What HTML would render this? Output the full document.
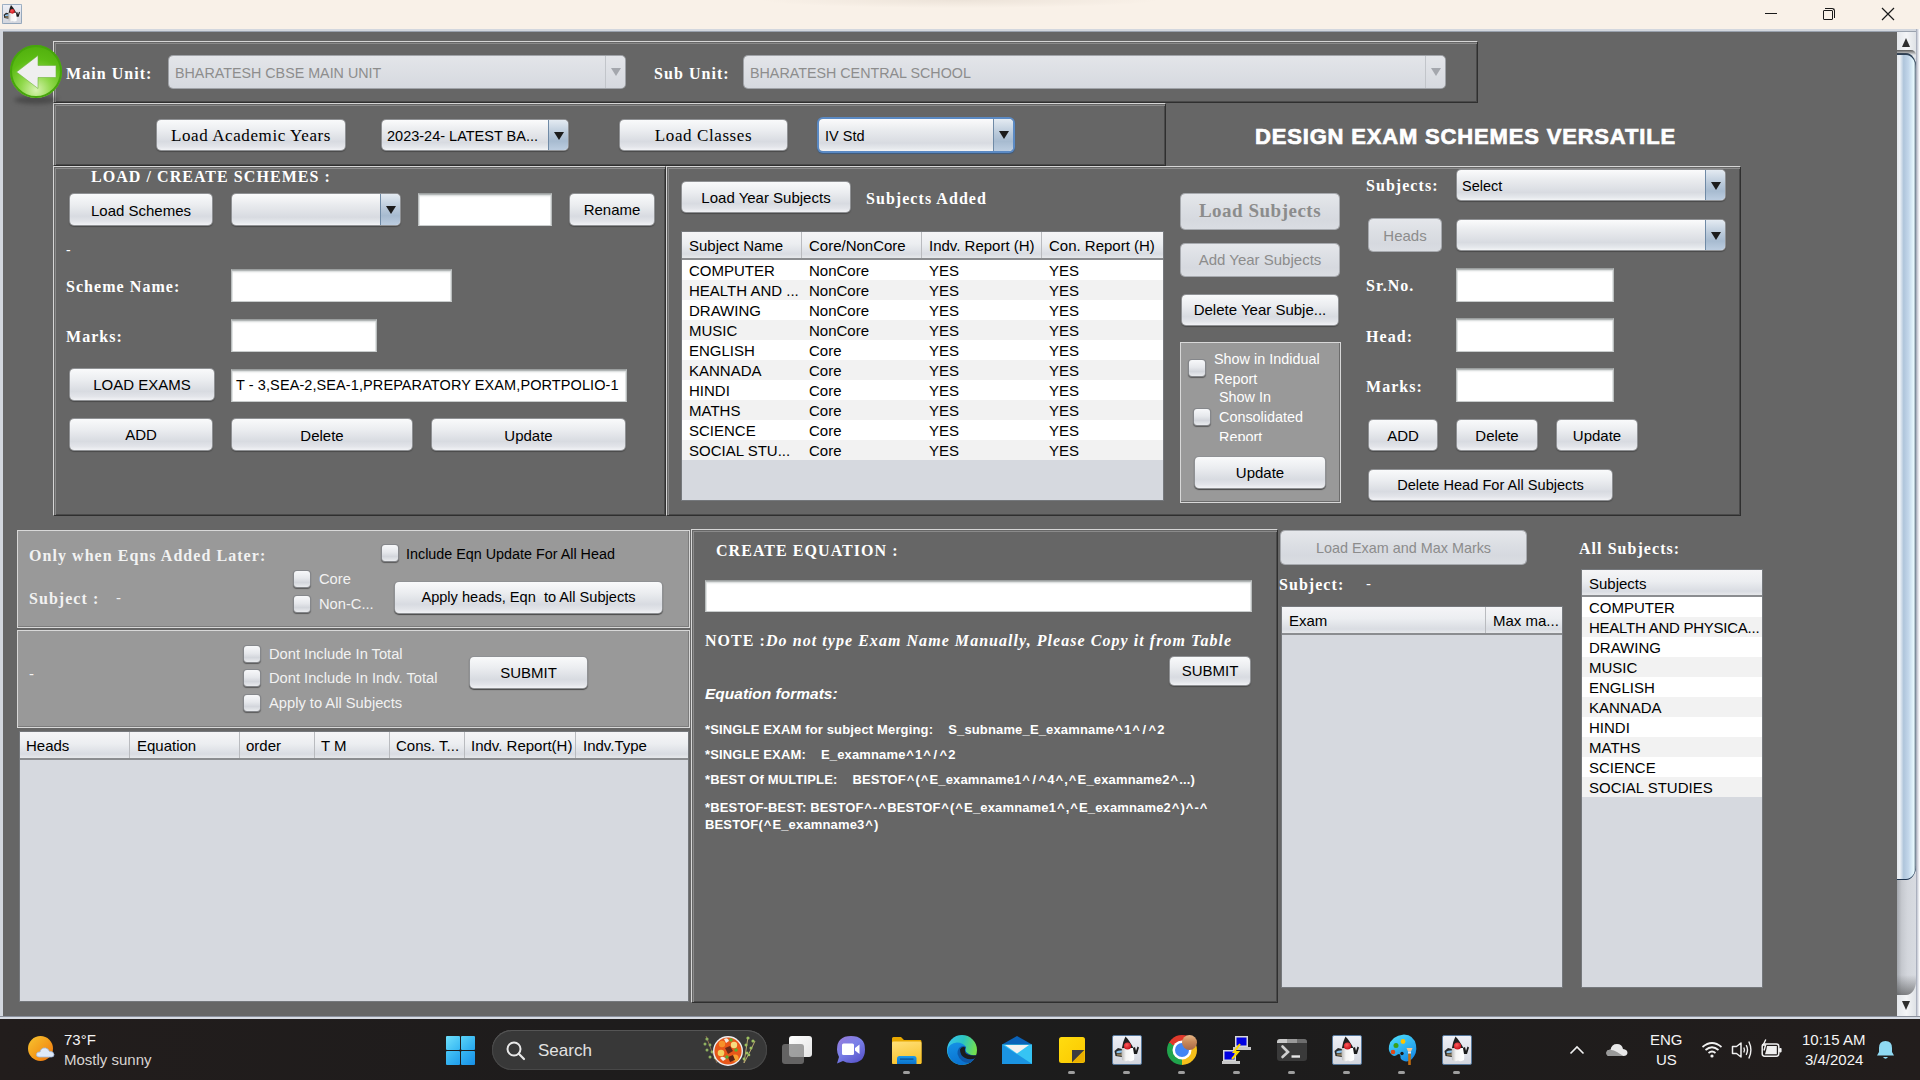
<!DOCTYPE html>
<html><head><meta charset="utf-8">
<style>
*{box-sizing:border-box;margin:0;padding:0}
html,body{width:1920px;height:1080px;overflow:hidden;background:#666666;font-family:"Liberation Sans",sans-serif;}
.a{position:absolute}
#title{left:0;top:0;width:1920px;height:29px;background:#f9f1e8}
#wborder{left:0;top:29px;width:1920px;height:991px;border-left:3px solid #d3d7de;border-top:2px solid #d3d7de;border-bottom:3px solid #d5d9e1;box-shadow:inset 0 1px 0 #9aa2ae}
.etch{border-top:1px solid #d2d2d2;border-left:1px solid #d2d2d2;box-shadow:inset 1px 1px 0 #8c8c8c, 1px 1px 0 #3c3c3c}
.pnl{border-top:1px solid #d6d6d6;border-left:1px solid #d6d6d6;border-right:1px solid #2f2f2f;border-bottom:1px solid #2f2f2f;box-shadow:inset 1px 1px 0 #666666, inset 2px 2px 0 #8a8a8a, inset -1px -1px 0 #4a4a4a}
.lbl{font-family:"Liberation Serif",serif;font-weight:bold;color:#fff;font-size:16px;white-space:nowrap;line-height:20px;letter-spacing:1.05px}
.btn{border-radius:4px;background:linear-gradient(#f9fafb 0%,#ebedf0 35%,#d8dbe1 72%,#e2e4e9 88%,#f1f2f5 100%);box-shadow:0 0 0 1px #8f9194, 0 1px 1px 1px #4a4a4a;color:#000;font-size:15px;text-align:center;white-space:nowrap;overflow:hidden}
.btn.dis{background:linear-gradient(#e5e7eb 0%,#dcdfe4 40%,#d6d9df 75%,#dadde2 100%);box-shadow:0 0 0 1px #a7aaaf, 0 1px 1px 0 #6a6a6a;color:#8c8c8c}
.cb{border-radius:4px;background:linear-gradient(#fbfbfc 0%,#e9ebee 35%,#d8dbe1 75%,#e6e9ed 92%,#f3f4f6 100%);box-shadow:0 0 0 1px #8f9194, 0 1px 1px 1px #4a4a4a;color:#000;font-size:15px;white-space:nowrap;overflow:hidden}
.cb .ar{position:absolute;right:0;top:0;bottom:0;width:20px;background:linear-gradient(#e4ebf2 0%,#b9c9da 45%,#a7bbd0 70%,#bccde0 100%);border-left:1px solid #6f8aa6;border-radius:0 4px 4px 0}
.cb .ar:after{content:"";position:absolute;left:5px;top:12px;border-left:5px solid transparent;border-right:5px solid transparent;border-top:8px solid #1c1c1c}
.cb.dis{background:linear-gradient(#e3e5e9,#d6d9df);box-shadow:0 0 0 1px #a0a3a8;color:#8d8d8d}
.cb.dis .ar{background:linear-gradient(#e3e5e9,#d6d9df);border-left:1px solid #c2c5ca}
.cb.dis .ar:after{border-top-color:#a4a7ad}
.tf{background:#fff;border-top:1px solid #9b9f9f;border-left:1px solid #b9bdbd;border-right:1px solid #b9bdbd;border-bottom:1px solid #c9cdcd;box-shadow:inset 0 1px 0 #b3b7b7, inset 0 3px 2px -1px #d3d7d7, inset 1px 0 0 #e2e5e5, inset -1px 0 0 #e2e5e5;font-size:15px;white-space:nowrap;overflow:hidden;color:#000}
.chk{width:16px;height:16px;border-radius:3px;background:linear-gradient(#f7f8fa 0%,#e6e8ec 45%,#d3d6dc 72%,#e9ebee 100%);box-shadow:0 0 0 1px #85878b,0 1px 1px 1px #5a5a5a}
.wt{color:#fff;font-size:15px;white-space:nowrap}
.th{background:linear-gradient(#f5f5f7 0%,#eceef1 45%,#d9dce2 85%,#e6e8eb 100%);border-bottom:2px solid #8b8d90;height:28px}
.th div{position:absolute;top:0;height:26px;line-height:27px;font-size:15px;white-space:nowrap;overflow:hidden;border-right:1px solid #b9bbbf;padding-left:7px;color:#000}
.tb{background:#d6d9df}
.row{position:absolute;left:0;right:0;height:20px;line-height:20px;font-size:15px;white-space:nowrap;color:#000}
.row:nth-child(odd){background:#fff}
.row:nth-child(even){background:#f2f2f2}
.row span{position:absolute;top:1px}
.eq{color:#fff;font-weight:bold;font-size:13px;white-space:pre;line-height:17px;letter-spacing:0.15px}
.eq i{font-style:normal}
.cr{margin:0 1px 0 0.8px}
.sl{margin:0 1.5px}
.jv{width:30px;height:29px;border-radius:2px;background:linear-gradient(#e8eaf0,#c4c8d0);box-shadow:0 0 0 1px #5d7ea3}
.jv:before{content:"";position:absolute;left:9px;top:3px;border-left:7px solid transparent;border-right:5px solid transparent;border-bottom:14px solid #1a1a1a}
.jv:after{content:"";position:absolute;left:12px;top:8px;width:8px;height:8px;border-radius:50%;background:#e3262c;box-shadow:-3px 9px 0 1px #f4f4f4}
</style></head><body>
<svg width="0" height="0" style="position:absolute"><defs>
<linearGradient id="dkbg" x1="0" y1="0" x2="0" y2="1"><stop offset="0" stop-color="#eef0f7"/><stop offset="1" stop-color="#d2d5dd"/></linearGradient>
<radialGradient id="dknose" cx="0.4" cy="0.35" r="0.6"><stop offset="0" stop-color="#ff5a5a"/><stop offset="1" stop-color="#c8141c"/></radialGradient>
<linearGradient id="dkbody" x1="0" y1="0" x2="1" y2="0"><stop offset="0" stop-color="#b8b8b8"/><stop offset="0.35" stop-color="#f4f4f4"/><stop offset="1" stop-color="#ffffff"/></linearGradient>
</defs></svg>
<div id="title" class="a"></div>
<div class="a" style="left:760px;top:0;width:400px;height:8px;background:radial-gradient(ellipse 50% 100% at 50% 0%,rgba(120,100,80,0.10),rgba(120,100,80,0))"></div>
<div id="wborder" class="a"></div>
<!-- title bar icons -->
<svg class="a" style="left:2px;top:4px" width="20" height="20" viewBox="0 0 30 30">
<rect x="0.5" y="0.5" width="29" height="29" rx="1.5" fill="url(#dkbg)" stroke="#56789c" stroke-width="1"/>
<path d="M6 13 L2.5 16 L3.5 21 L10 22 L10 14 Z" fill="#2a2a2a"/>
<path d="M4.5 16.5 Q7 15 10 15.5 L10 17.5 Q7 18 4.5 18 Z" fill="#8cc4f0"/>
<path d="M4.5 18.5 L10 18.5 L10 21 L5 20.5 Z" fill="#8a7a5a"/>
<path d="M10 12 L20 11 Q23 18 22 25 Q19 27 16 25.5 Q13 27 10 25 Q9 18 10 12 Z" fill="url(#dkbody)"/>
<path d="M13.5 1.5 Q17 5 21.5 13 L10 13 Q11 6 13.5 1.5 Z" fill="#202020"/>
<circle cx="15.5" cy="11" r="3.6" fill="url(#dknose)"/>
<path d="M21 13 L23 12 L24 16 L25.5 11.5 L27 12.5 L25 19 L22 19 Z" fill="#1a1a1a"/>
</svg>
<div class="a" style="left:1765px;top:13px;width:12px;height:1px;background:#1a1a1a"></div>
<div class="a" style="left:1823px;top:10px;width:10px;height:10px;border:1px solid #1a1a1a;border-radius:1px"></div>
<div class="a" style="left:1825px;top:8px;width:10px;height:10px;border-top:1.2px solid #1a1a1a;border-right:1.2px solid #1a1a1a;border-radius:0 3px 0 0"></div>
<svg class="a" style="left:1881px;top:7px" width="14" height="14"><path d="M1 1L13 13M13 1L1 13" stroke="#1a1a1a" stroke-width="1.2"/></svg>

<!-- scrollbar -->
<div class="a" style="left:1916px;top:29px;width:4px;height:990px;background:linear-gradient(90deg,#9aa0b0 0%,#d0d3dc 40%,#f4f5f8 80%,#fff 100%)"></div>
<div class="a" style="left:1897px;top:32px;width:19px;height:984px;background:linear-gradient(90deg,#a4a8ae 0%,#c6c9cf 25%,#d3d6dc 55%,#d8dbe1 100%)"></div>
<div class="a" style="left:1897px;top:32px;width:19px;height:26px;background:linear-gradient(90deg,#e4e7eb,#f4f5f7 50%,#dfe2e6)"></div>
<div class="a" style="left:1902px;top:38px;width:0;height:0;border-left:4.5px solid transparent;border-right:4.5px solid transparent;border-bottom:9px solid #2e2e2e"></div>
<div class="a" style="left:1897px;top:53px;width:19px;height:827px;border-radius:0 10px 10px 0/0 14px 14px 0;background:linear-gradient(90deg,#e4e9ee 0%,#eef2f6 15%,#afc5db 35%,#c2d6ea 60%,#e6f8fd 88%,#5f7080 100%);box-shadow:inset 0 2px 0 #2a3e55, inset 0 -1px 0 #1f3550"></div>
<div class="a" style="left:1897px;top:50px;width:19px;height:5px;border-radius:0 10px 0 0/0 10px 0 0;background:linear-gradient(#5a5a5a,rgba(90,90,90,0))"></div>
<div class="a" style="left:1897px;top:984px;width:19px;height:32px;background:linear-gradient(90deg,#e4e7eb,#f4f5f7 50%,#dfe2e6)"></div>
<div class="a" style="left:1897px;top:950px;width:19px;height:45px;border-radius:0 0 10px 0/0 0 14px 0;background:linear-gradient(90deg,#a4a8ae 0%,#c6c9cf 25%,#d3d6dc 55%,#d8dbe1 100%)"></div>
<div class="a" style="left:1897px;top:975px;width:19px;height:20px;border-radius:0 0 10px 0/0 0 14px 0;background:linear-gradient(rgba(60,60,60,0) 0%,rgba(60,60,60,0.55) 100%)"></div>
<div class="a" style="left:1902px;top:1001px;width:0;height:0;border-left:4.5px solid transparent;border-right:4.5px solid transparent;border-top:9px solid #2e2e2e"></div>

<!-- panels -->
<div class="a pnl" style="left:53px;top:41px;width:1425px;height:62px"></div>
<div class="a pnl" style="left:53px;top:103px;width:1113px;height:63px"></div>
<div class="a pnl" style="left:53px;top:166px;width:613px;height:350px"></div>
<div class="a pnl" style="left:666px;top:166px;width:1075px;height:350px"></div>

<!-- back button -->
<div class="a" style="left:14px;top:96px;width:44px;height:8px;border-radius:50%;background:rgba(40,40,40,0.45);filter:blur(2px)"></div>
<div class="a" style="left:10px;top:45px;width:52px;height:53px;border-radius:50%;background:radial-gradient(circle at 50% 85%,#d8f3b0 0%,#8fd84a 30%,#5cbc14 60%,#4aa80a 100%);box-shadow:inset 0 0 0 2px #46a50c"></div>
<svg class="a" style="left:10px;top:45px" width="52" height="53"><path d="M6.5 27 L28 10.5 L28 20.5 L46 20.5 L46 32.5 L28 32.5 L28 43.5 Z" fill="#efefef" stroke="#6fb43c" stroke-width="0.6"/></svg>

<!-- top panel -->
<div class="a lbl" style="left:66px;top:64px">Main Unit:</div>
<div class="a cb dis" style="left:169px;top:56px;width:456px;height:32px"><span class="a" style="left:6px;top:9px;font-size:14.3px">BHARATESH CBSE MAIN UNIT</span><div class="ar"></div></div>
<div class="a lbl" style="left:654px;top:64px">Sub Unit:</div>
<div class="a cb dis" style="left:744px;top:56px;width:701px;height:32px"><span class="a" style="left:6px;top:9px;font-size:14.3px">BHARATESH CENTRAL SCHOOL</span><div class="ar"></div></div>

<!-- second panel -->
<div class="a btn" style="left:157px;top:120px;width:188px;height:30px;font-family:'Liberation Serif',serif;font-size:17px;letter-spacing:0.6px;line-height:31px">Load Academic Years</div>
<div class="a cb" style="left:382px;top:120px;width:186px;height:30px"><span class="a" style="left:5px;top:8px;font-size:14.5px">2023-24- LATEST BA...</span><div class="ar"></div></div>
<div class="a btn" style="left:620px;top:120px;width:167px;height:30px;font-family:'Liberation Serif',serif;font-size:17px;letter-spacing:0.6px;line-height:31px">Load Classes</div>
<div class="a cb" style="left:819px;top:119px;width:194px;height:32px;box-shadow:0 0 0 2px #5b8ac4,0 1px 1px 2px #3d5a7d"><span class="a" style="left:6px;top:9px;font-size:14.5px">IV Std</span><div class="ar"></div></div>
<div class="a" style="left:1255px;top:123px;font-size:22px;font-weight:bold;color:#fff;letter-spacing:0.83px;white-space:nowrap;line-height:28px;-webkit-text-stroke:0.7px #fff">DESIGN EXAM SCHEMES VERSATILE</div>

<!-- left schemes panel -->
<div class="a lbl" style="left:91px;top:167px">LOAD / CREATE SCHEMES :</div>
<div class="a btn" style="left:70px;top:194px;width:142px;height:31px;line-height:33px">Load Schemes</div>
<div class="a cb" style="left:232px;top:194px;width:168px;height:31px"><div class="ar"></div></div>
<div class="a tf" style="left:418px;top:193px;width:134px;height:33px"></div>
<div class="a btn" style="left:570px;top:194px;width:84px;height:31px;line-height:31px">Rename</div>
<div class="a wt" style="left:66px;top:242px;font-size:14px">-</div>
<div class="a lbl" style="left:66px;top:277px">Scheme Name:</div>
<div class="a tf" style="left:231px;top:269px;width:221px;height:33px"></div>
<div class="a lbl" style="left:66px;top:327px">Marks:</div>
<div class="a tf" style="left:231px;top:319px;width:146px;height:33px"></div>
<div class="a btn" style="left:70px;top:369px;width:144px;height:31px;line-height:31px">LOAD EXAMS</div>
<div class="a tf" style="left:231px;top:369px;width:396px;height:33px"><span class="a" style="left:4px;top:7px;font-size:14.5px;letter-spacing:0.09px">T - 3,SEA-2,SEA-1,PREPARATORY EXAM,PORTPOLIO-1</span></div>
<div class="a btn" style="left:70px;top:419px;width:142px;height:31px;line-height:31px">ADD</div>
<div class="a btn" style="left:232px;top:419px;width:180px;height:31px;line-height:33px">Delete</div>
<div class="a btn" style="left:432px;top:419px;width:193px;height:31px;line-height:33px">Update</div>

<!-- middle panel -->
<div class="a btn" style="left:682px;top:182px;width:168px;height:30px;line-height:32px">Load Year Subjects</div>
<div class="a lbl" style="left:866px;top:189px">Subjects Added</div>
<div class="a" style="left:681px;top:231px;width:483px;height:270px;background:#75787c"></div>
<div class="a tb" style="left:682px;top:232px;width:481px;height:268px;overflow:hidden">
 <div class="a th" style="left:0;top:0;width:481px">
  <div style="left:0;width:120px">Subject Name</div>
  <div style="left:120px;width:120px">Core/NonCore</div>
  <div style="left:240px;width:120px">Indv. Report (H)</div>
  <div style="left:360px;width:121px;border-right:none">Con. Report (H)</div>
 </div>
 <div class="a" style="left:0;top:28px;width:481px;height:200px">
  <div class="row" style="top:0"><span style="left:7px">COMPUTER</span><span style="left:127px">NonCore</span><span style="left:247px">YES</span><span style="left:367px">YES</span></div>
  <div class="row" style="top:20px"><span style="left:7px">HEALTH AND ...</span><span style="left:127px">NonCore</span><span style="left:247px">YES</span><span style="left:367px">YES</span></div>
  <div class="row" style="top:40px"><span style="left:7px">DRAWING</span><span style="left:127px">NonCore</span><span style="left:247px">YES</span><span style="left:367px">YES</span></div>
  <div class="row" style="top:60px"><span style="left:7px">MUSIC</span><span style="left:127px">NonCore</span><span style="left:247px">YES</span><span style="left:367px">YES</span></div>
  <div class="row" style="top:80px"><span style="left:7px">ENGLISH</span><span style="left:127px">Core</span><span style="left:247px">YES</span><span style="left:367px">YES</span></div>
  <div class="row" style="top:100px"><span style="left:7px">KANNADA</span><span style="left:127px">Core</span><span style="left:247px">YES</span><span style="left:367px">YES</span></div>
  <div class="row" style="top:120px"><span style="left:7px">HINDI</span><span style="left:127px">Core</span><span style="left:247px">YES</span><span style="left:367px">YES</span></div>
  <div class="row" style="top:140px"><span style="left:7px">MATHS</span><span style="left:127px">Core</span><span style="left:247px">YES</span><span style="left:367px">YES</span></div>
  <div class="row" style="top:160px"><span style="left:7px">SCIENCE</span><span style="left:127px">Core</span><span style="left:247px">YES</span><span style="left:367px">YES</span></div>
  <div class="row" style="top:180px"><span style="left:7px">SOCIAL STU...</span><span style="left:127px">Core</span><span style="left:247px">YES</span><span style="left:367px">YES</span></div>
 </div>
</div>
<div class="a btn dis" style="left:1181px;top:194px;width:158px;height:35px;line-height:35px;font-family:'Liberation Serif',serif;font-weight:bold;font-size:19px;letter-spacing:0.5px;padding-top:0;line-height:33px">Load Subjects</div>
<div class="a btn dis" style="left:1181px;top:244px;width:158px;height:32px;line-height:32px">Add Year Subjects</div>
<div class="a btn" style="left:1182px;top:295px;width:156px;height:30px;line-height:30px">Delete Year Subje...</div>
<div class="a" style="left:1180px;top:342px;width:161px;height:161px;background:#999999;border:1px solid #d8d8d8;box-shadow:inset -1px -1px 0 #6c6c6c"></div>
<div class="a chk" style="left:1189px;top:360px"></div>
<div class="a wt" style="left:1214px;top:349px;line-height:20px;font-size:14.4px">Show in Indidual<br>Report</div>
<div class="a chk" style="left:1194px;top:409px"></div>
<div class="a" style="left:1219px;top:387px;width:110px;height:54px;overflow:hidden"><div class="wt" style="line-height:20px;font-size:14.4px">Show In<br>Consolidated<br>Report</div></div>
<div class="a btn" style="left:1195px;top:457px;width:130px;height:31px;line-height:31px">Update</div>

<!-- right subjects section -->
<div class="a lbl" style="left:1366px;top:176px">Subjects:</div>
<div class="a cb" style="left:1457px;top:170px;width:268px;height:30px"><span class="a" style="left:5px;top:8px;font-size:14.5px">Select</span><div class="ar"></div></div>
<div class="a btn dis" style="left:1369px;top:219px;width:72px;height:32px;line-height:34px">Heads</div>
<div class="a cb" style="left:1457px;top:220px;width:268px;height:30px"><div class="ar"></div></div>
<div class="a lbl" style="left:1366px;top:276px">Sr.No.</div>
<div class="a tf" style="left:1456px;top:268px;width:158px;height:34px"></div>
<div class="a lbl" style="left:1366px;top:327px">Head:</div>
<div class="a tf" style="left:1456px;top:318px;width:158px;height:34px"></div>
<div class="a lbl" style="left:1366px;top:377px">Marks:</div>
<div class="a tf" style="left:1456px;top:368px;width:158px;height:34px"></div>
<div class="a btn" style="left:1369px;top:420px;width:68px;height:30px;line-height:32px">ADD</div>
<div class="a btn" style="left:1457px;top:420px;width:80px;height:30px;line-height:32px">Delete</div>
<div class="a btn" style="left:1557px;top:420px;width:80px;height:30px;line-height:32px">Update</div>
<div class="a btn" style="left:1369px;top:470px;width:243px;height:30px;line-height:30px;font-size:14.6px">Delete Head For All Subjects</div>

<!-- bottom left panels -->
<div class="a" style="left:17px;top:530px;width:673px;height:98px;background:#999999;border:1px solid #d8d8d8;box-shadow:inset -1px -1px 0 #7c7c7c"></div>
<div class="a" style="left:17px;top:630px;width:673px;height:98px;background:#999999;border:1px solid #d8d8d8;box-shadow:inset -1px -1px 0 #7c7c7c"></div>
<div class="a lbl" style="left:29px;top:546px;color:#f2f2f2">Only when Eqns Added Later:</div>
<div class="a lbl" style="left:29px;top:589px;color:#f2f2f2">Subject :</div>
<div class="a wt" style="left:116px;top:589px;color:#f2f2f2">-</div>
<div class="a chk" style="left:382px;top:545px"></div>
<div class="a" style="left:406px;top:545px;font-size:14.35px;white-space:nowrap;color:#000;line-height:18px">Include Eqn Update For All Head</div>
<div class="a chk" style="left:294px;top:571px"></div>
<div class="a wt" style="left:319px;top:570px;color:#f2f2f2;line-height:18px;font-size:14.7px">Core</div>
<div class="a chk" style="left:294px;top:596px"></div>
<div class="a wt" style="left:319px;top:595px;color:#f2f2f2;line-height:18px;font-size:14.7px">Non-C...</div>
<div class="a btn" style="left:395px;top:582px;width:267px;height:31px;line-height:31px;font-size:14.6px">Apply heads, Eqn&nbsp; to All Subjects</div>
<div class="a wt" style="left:29px;top:665px;color:#f2f2f2">-</div>
<div class="a chk" style="left:244px;top:646px"></div>
<div class="a wt" style="left:269px;top:645px;color:#f2f2f2;line-height:18px;font-size:14.7px">Dont Include In Total</div>
<div class="a chk" style="left:244px;top:670px"></div>
<div class="a wt" style="left:269px;top:669px;color:#f2f2f2;line-height:18px;font-size:14.7px">Dont Include In Indv. Total</div>
<div class="a chk" style="left:244px;top:695px"></div>
<div class="a wt" style="left:269px;top:694px;color:#f2f2f2;line-height:18px;font-size:14.7px">Apply to All Subjects</div>
<div class="a btn" style="left:470px;top:657px;width:117px;height:31px;line-height:31px">SUBMIT</div>

<!-- heads table -->
<div class="a" style="left:19px;top:731px;width:670px;height:271px;background:#75787c"></div>
<div class="a tb" style="left:20px;top:732px;width:668px;height:269px;overflow:hidden">
 <div class="a th" style="left:0;top:0;width:668px">
  <div style="left:0;width:110px;padding-left:6px">Heads</div>
  <div style="left:110px;width:110px">Equation</div>
  <div style="left:220px;width:75px;padding-left:6px">order</div>
  <div style="left:295px;width:75px;padding-left:6px">T M</div>
  <div style="left:370px;width:75px;padding-left:6px">Cons. T...</div>
  <div style="left:445px;width:111px;padding-left:6px">Indv. Report(H)</div>
  <div style="left:556px;width:112px;padding-left:7px;border-right:none">Indv.Type</div>
 </div>
</div>

<!-- create equation panel -->
<div class="a pnl" style="left:691px;top:529px;width:587px;height:474px"></div>
<div class="a lbl" style="left:716px;top:541px">CREATE EQUATION :</div>
<div class="a tf" style="left:705px;top:580px;width:547px;height:32px"></div>
<div class="a lbl" style="left:705px;top:631px;white-space:pre">NOTE :<i style="letter-spacing:1.05px">Do not type Exam Name Manually, Please Copy it from Table</i></div>
<div class="a btn" style="left:1170px;top:657px;width:80px;height:28px;line-height:28px">SUBMIT</div>
<div class="a" style="left:705px;top:684px;color:#fff;font-weight:bold;font-style:italic;font-size:15.5px;white-space:nowrap;line-height:20px">Equation formats:</div>
<div class="a eq" style="left:705px;top:721px">*SINGLE EXAM for subject Merging:    S_subname_E_examname<i class="cr">^</i>1<i class="cr">^</i><i class="sl">/</i><i class="cr">^</i>2</div>
<div class="a eq" style="left:705px;top:746px">*SINGLE EXAM:    E_examname<i class="cr">^</i>1<i class="cr">^</i><i class="sl">/</i><i class="cr">^</i>2</div>
<div class="a eq" style="left:705px;top:771px">*BEST Of MULTIPLE:    BESTOF<i class="cr">^</i>(<i class="cr">^</i>E_examname1<i class="cr">^</i><i class="sl">/</i><i class="cr">^</i>4<i class="cr">^</i>,<i class="cr">^</i>E_examname2<i class="cr">^</i>...)</div>
<div class="a eq" style="left:705px;top:799px">*BESTOF-BEST: BESTOF<i class="cr">^</i>-<i class="cr">^</i>BESTOF<i class="cr">^</i>(<i class="cr">^</i>E_examname1<i class="cr">^</i>,<i class="cr">^</i>E_examname2<i class="cr">^</i>)<i class="cr">^</i>-<i class="cr">^</i><br>BESTOF(<i class="cr">^</i>E_examname3<i class="cr">^</i>)</div>

<!-- right bottom area -->
<div class="a btn dis" style="left:1281px;top:531px;width:245px;height:33px;line-height:35px;font-size:14.4px">Load Exam and Max Marks</div>
<div class="a lbl" style="left:1279px;top:575px">Subject:</div>
<div class="a wt" style="left:1366px;top:575px">-</div>
<div class="a" style="left:1281px;top:606px;width:282px;height:382px;background:#75787c"></div>
<div class="a tb" style="left:1282px;top:607px;width:280px;height:380px;overflow:hidden">
 <div class="a th" style="left:0;top:0;width:280px">
  <div style="left:0;width:204px">Exam</div>
  <div style="left:204px;width:76px;padding-left:7px;border-right:none">Max ma...</div>
 </div>
</div>
<div class="a lbl" style="left:1579px;top:539px">All Subjects:</div>
<div class="a" style="left:1581px;top:569px;width:182px;height:419px;background:#75787c"></div>
<div class="a tb" style="left:1582px;top:570px;width:180px;height:417px;overflow:hidden">
 <div class="a th" style="left:0;top:0;width:180px;height:27px">
  <div style="left:0;width:180px;border-right:none">Subjects</div>
 </div>
 <div class="a" style="left:0;top:27px;width:180px;height:200px">
  <div class="row" style="top:0"><span style="left:7px">COMPUTER</span></div>
  <div class="row" style="top:20px"><span style="left:7px;letter-spacing:-0.25px">HEALTH AND PHYSICA...</span></div>
  <div class="row" style="top:40px"><span style="left:7px">DRAWING</span></div>
  <div class="row" style="top:60px"><span style="left:7px">MUSIC</span></div>
  <div class="row" style="top:80px"><span style="left:7px">ENGLISH</span></div>
  <div class="row" style="top:100px"><span style="left:7px">KANNADA</span></div>
  <div class="row" style="top:120px"><span style="left:7px">HINDI</span></div>
  <div class="row" style="top:140px"><span style="left:7px">MATHS</span></div>
  <div class="row" style="top:160px"><span style="left:7px">SCIENCE</span></div>
  <div class="row" style="top:180px"><span style="left:7px">SOCIAL STUDIES</span></div>
 </div>
</div>

<!-- taskbar -->
<div class="a" style="left:0;top:1016px;width:1920px;height:1px;background:#8a909c"></div>
<div class="a" style="left:0;top:1017px;width:1920px;height:2px;background:#d8dce4"></div>
<div class="a" style="left:0;top:1019px;width:1920px;height:61px;background:linear-gradient(90deg,#221d1c 0%,#1e1c1c 30%,#1c1c1c 60%,#221d1c 100%)"></div>
<!-- weather -->
<div class="a" style="left:28px;top:1036px;width:25px;height:25px;border-radius:50%;background:linear-gradient(135deg,#f7c531 0%,#f39a1a 55%,#f0700e 100%)"></div>
<svg class="a" style="left:36px;top:1044px" width="20" height="14"><path d="M3 13 Q0 13 0.5 10 Q1 7.5 4 8 Q5 3.5 9.5 4 Q12.5 4.5 13.5 7.5 Q17.5 7 18 10.5 Q18 13 15.5 13 Z" fill="#dfe9f8" stroke="#9fb9de" stroke-width="0.8"/></svg>
<div class="a" style="left:64px;top:1031px;color:#f4f4f4;font-size:15px;line-height:18px;white-space:nowrap">73°F</div>
<div class="a" style="left:64px;top:1051px;color:#d8d4d2;font-size:15px;line-height:18px;white-space:nowrap">Mostly sunny</div>
<!-- start -->
<div class="a" style="left:446px;top:1036px;width:14px;height:14px;background:linear-gradient(135deg,#6fe0fb,#34b6f3);border-radius:1px"></div>
<div class="a" style="left:461px;top:1036px;width:14px;height:14px;background:linear-gradient(135deg,#5ad3f8,#25a6ee);border-radius:1px"></div>
<div class="a" style="left:446px;top:1051px;width:14px;height:14px;background:linear-gradient(135deg,#48c6f6,#1f9ceb);border-radius:1px"></div>
<div class="a" style="left:461px;top:1051px;width:14px;height:14px;background:linear-gradient(135deg,#38b8f3,#178fe6);border-radius:1px"></div>
<!-- search -->
<div class="a" style="left:492px;top:1030px;width:275px;height:40px;border-radius:20px;background:#383838;box-shadow:inset 0 1px 0 #555, inset 0 0 0 1px #484848"></div>
<svg class="a" style="left:505px;top:1040px" width="22" height="22"><circle cx="9" cy="9" r="6.5" fill="none" stroke="#e8e8e8" stroke-width="2"/><path d="M13.8 13.8 L19 19" stroke="#e8e8e8" stroke-width="2.2" stroke-linecap="round"/></svg>
<div class="a" style="left:538px;top:1040px;color:#e2e2e2;font-size:17px;line-height:22px;white-space:nowrap">Search</div>
<svg class="a" style="left:702px;top:1034px" width="70" height="34">
<path d="M4 2 Q9 16 15 29" stroke="#8a6a50" stroke-width="1" fill="none"/>
<g fill="#8fb060"><circle cx="5" cy="5" r="1.6"/><circle cx="3" cy="10" r="1.5"/><circle cx="8" cy="11" r="1.4"/><circle cx="5" cy="16" r="1.5"/><circle cx="10" cy="18" r="1.4"/><circle cx="8" cy="23" r="1.5"/><circle cx="13" cy="24" r="1.3"/></g>
<path d="M46 3 Q44 16 42 29 M53 7 Q48 18 42 29" stroke="#b8a870" stroke-width="1" fill="none"/>
<g fill="#9cc060"><circle cx="46" cy="4" r="1.6"/><circle cx="51" cy="7" r="1.6"/><circle cx="44" cy="11" r="1.5"/><circle cx="49" cy="14" r="1.5"/><circle cx="45" cy="19" r="1.5"/><circle cx="42" cy="25" r="1.4"/><circle cx="47" cy="21" r="1.3"/></g>
<circle cx="26" cy="17" r="15" fill="#eef0f4"/>
<circle cx="26" cy="17" r="13.6" fill="#e8571a"/>
<circle cx="20" cy="10" r="3.2" fill="#f6922a"/><circle cx="33" cy="24" r="3.6" fill="#f8a030"/>
<circle cx="19" cy="19" r="3.3" fill="#f4d060"/><circle cx="32" cy="11" r="3.2" fill="#f6dc80"/>
<path d="M23 14 L28 12 L31 17 L26 20 Z" fill="#6a2a18"/><path d="M26 23 L31 21 L33 26 L28 28 Z" fill="#5c2414"/>
<circle cx="29" cy="6" r="1.7" fill="#5ab030"/><circle cx="34" cy="16" r="1.8" fill="#5ab030"/><circle cx="25" cy="23" r="1.7" fill="#5ab030"/>
<path d="M22 5 Q26 3 27 7 L24 9 Z" fill="#f0ece4"/><path d="M18 24 Q21 21 24 25 L21 27 Z" fill="#f0ece4"/>
</svg>
<!-- task view -->
<div class="a" style="left:789px;top:1036px;width:23px;height:21px;border-radius:3px;background:linear-gradient(135deg,#ffffff,#e4e4e4)"></div>
<div class="a" style="left:782px;top:1044px;width:22px;height:20px;border-radius:3px;background:rgba(128,128,128,0.72)"></div>
<!-- meet -->
<svg class="a" style="left:836px;top:1035px" width="31" height="30"><defs><linearGradient id="mt" x1="0" y1="0" x2="0.7" y2="1"><stop offset="0" stop-color="#9a7ad8"/><stop offset="0.5" stop-color="#7a80e8"/><stop offset="1" stop-color="#5a56cc"/></linearGradient></defs>
<path d="M15 1 Q29 1 29 14.5 Q29 28 15 28 Q10 28 7 26 L1 28.5 L3 22 Q1 18.5 1 14.5 Q1 1 15 1 Z" fill="url(#mt)"/>
<rect x="6" y="8.5" width="12" height="11.5" rx="1.5" fill="#fff"/><path d="M19 13 L23.5 9.5 L23.5 19 L19 15.5 Z" fill="#fff"/>
</svg>
<!-- explorer -->
<svg class="a" style="left:891px;top:1036px" width="32" height="29"><defs><linearGradient id="fd" x1="0" y1="0" x2="0.3" y2="1"><stop offset="0" stop-color="#ffe07a"/><stop offset="1" stop-color="#f8c430"/></linearGradient><linearGradient id="fdb" x1="0" y1="0" x2="0" y2="1"><stop offset="0" stop-color="#1e9ae8"/><stop offset="1" stop-color="#0a72cc"/></linearGradient></defs>
<path d="M1 2.5 Q1 1 2.5 1 L10 1 L13 4 L29.5 4 Q30.5 4 30.5 5.5 L30.5 26.5 Q30.5 28 29 28 L2.5 28 Q1 28 1 26.5 Z" fill="#e8a800"/>
<path d="M1 6.5 Q1 5.5 2.5 5.5 L29 5.5 Q30.5 5.5 30.5 7 L30.5 26.5 Q30.5 28 29 28 L2.5 28 Q1 28 1 26.5 Z" fill="url(#fd)"/>
<path d="M6 28 L6 22.5 Q6 20 8.5 20 L23 20 Q25.5 20 25.5 22.5 L25.5 28 Z" fill="url(#fdb)"/>
<rect x="9" y="22.5" width="13.5" height="1.2" fill="#0a4a8a"/>
</svg>
<div class="a" style="left:903px;top:1071px;width:7px;height:3px;border-radius:2px;background:#9e9e9e"></div>
<!-- edge -->
<svg class="a" style="left:947px;top:1035px" width="30" height="30"><defs><linearGradient id="edg1" x1="0" y1="0" x2="1" y2="0.3"><stop offset="0" stop-color="#38c4f4"/><stop offset="0.55" stop-color="#2cc4c0"/><stop offset="1" stop-color="#72e050"/></linearGradient><linearGradient id="edg2" x1="0" y1="0" x2="0.3" y2="1"><stop offset="0" stop-color="#1592e6"/><stop offset="1" stop-color="#0a72d0"/></linearGradient></defs>
<circle cx="15" cy="15" r="15" fill="url(#edg1)"/>
<path d="M0.5 15 Q2 8 10 7.5 Q16 7.5 19 12 L19 17 Q22 21 29.2 20.5 A15 15 0 0 1 15 30 A15 15 0 0 1 0.5 15 Z" fill="url(#edg2)"/>
<path d="M12 13 Q16 9.5 19 12 Q17 14 19 17 Q23 20.5 29.2 20.5 A15 15 0 0 1 23 28 Q13 28 10.5 19 Q10.5 15 12 13 Z" fill="#0e58a8"/>
<path d="M13 14.5 Q15 11 18.5 12.5 Q17 15 18.5 18 Q21 21 29.4 20.3 L28.6 23.2 Q23 25.5 18 23 Q13 20.5 13 14.5 Z" fill="#1c1c1c"/>
</svg>
<!-- mail -->
<svg class="a" style="left:1002px;top:1035px" width="30" height="30"><path d="M0 9.5 L15 1 L30 9.5 Z" fill="#0a62b8"/><path d="M0 9.5 L30 9.5 L30 29 L0 29 Z" fill="#1d9ce6"/><path d="M30 9.5 L30 29 L0 9.5 Z" fill="#36c4f4"/><path d="M0 9.5 L0 29 L30 29 Z" fill="#1a8fe0" opacity="0.6"/><path d="M3 10 L27 10 L15 18.5 Z" fill="#f4f2f0"/></svg>
<!-- sticky -->
<div class="a" style="left:1059px;top:1037px;width:26px;height:26px;border-radius:2.5px;background:linear-gradient(135deg,#ffdc10,#fbc800)"></div>
<svg class="a" style="left:1072px;top:1050px" width="13" height="13"><path d="M0 0 L12.5 0 L0 12.5 Z" fill="#3c3c40"/><path d="M12.5 0 L12.5 10.5 Q12.5 12.5 10.5 12.5 L0 12.5 Z" fill="#eab000"/></svg>
<div class="a" style="left:1068px;top:1071px;width:7px;height:3px;border-radius:2px;background:#9e9e9e"></div>
<!-- java 1 -->
<svg class="a" style="left:1112px;top:1035px" width="30" height="30" viewBox="0 0 30 30">
<rect x="0.5" y="0.5" width="29" height="29" rx="1.5" fill="url(#dkbg)" stroke="#56789c" stroke-width="1"/>
<path d="M6 13 L2.5 16 L3.5 21 L10 22 L10 14 Z" fill="#2a2a2a"/>
<path d="M4.5 16.5 Q7 15 10 15.5 L10 17.5 Q7 18 4.5 18 Z" fill="#8cc4f0"/>
<path d="M4.5 18.5 L10 18.5 L10 21 L5 20.5 Z" fill="#8a7a5a"/>
<path d="M10 12 L20 11 Q23 18 22 25 Q19 27 16 25.5 Q13 27 10 25 Q9 18 10 12 Z" fill="url(#dkbody)"/>
<path d="M13.5 1.5 Q17 5 21.5 13 L10 13 Q11 6 13.5 1.5 Z" fill="#202020"/>
<circle cx="15.5" cy="11" r="3.6" fill="url(#dknose)"/>
<path d="M21 13 L23 12 L24 16 L25.5 11.5 L27 12.5 L25 19 L22 19 Z" fill="#1a1a1a"/>
</svg>
<div class="a" style="left:1123px;top:1071px;width:7px;height:3px;border-radius:2px;background:#9e9e9e"></div>
<!-- chrome -->
<div class="a" style="left:1167px;top:1035px;width:30px;height:30px;border-radius:50%;background:conic-gradient(from -60deg,#e0392b 0deg 120deg,#f5bf1a 120deg 240deg,#20a44c 240deg 360deg)"></div>
<div class="a" style="left:1175px;top:1043px;width:14px;height:14px;border-radius:50%;background:#4285f4;box-shadow:0 0 0 2.5px #fff"></div>
<div class="a" style="left:1182px;top:1035px;width:15px;height:15px;border-radius:50%;background:linear-gradient(#e8b888 0%,#c98a5a 45%,#a8684a 100%)"></div>
<div class="a" style="left:1178px;top:1071px;width:7px;height:3px;border-radius:2px;background:#9e9e9e"></div>
<!-- network -->
<svg class="a" style="left:1222px;top:1035px" width="30" height="30"><rect x="13" y="1" width="13" height="11" fill="#d8d8d8"/><rect x="14.5" y="2.5" width="10" height="8" fill="#0000e0"/><rect x="11" y="12" width="18" height="3" fill="#c8c8c8"/><rect x="1" y="15" width="13" height="11" fill="#d8d8d8"/><rect x="2.5" y="16.5" width="10" height="8" fill="#0000e0"/><rect x="0" y="26" width="18" height="3" fill="#c8c8c8"/><path d="M18 9 L12 17 L16 17 L10 24" stroke="#ffd800" stroke-width="2" fill="none"/></svg>
<div class="a" style="left:1233px;top:1071px;width:7px;height:3px;border-radius:2px;background:#9e9e9e"></div>
<!-- terminal -->
<div class="a" style="left:1277px;top:1039px;width:30px;height:22px;border-radius:3px;background:#3a3a3a"></div><div class="a" style="left:1277px;top:1039px;width:30px;height:4px;border-radius:3px 3px 0 0;background:linear-gradient(90deg,#c8c8c8 0 33%,#9a9a9a 33% 66%,#6e6e6e 66%)"></div>
<svg class="a" style="left:1280px;top:1044px" width="24" height="16"><path d="M2.5 2.5 L8 8 L2.5 13" stroke="#d0d0d0" stroke-width="2.6" fill="none" stroke-linecap="round"/><path d="M11.5 12.5 L20 12.5" stroke="#e8e8e8" stroke-width="2.4"/></svg>
<div class="a" style="left:1288px;top:1071px;width:7px;height:3px;border-radius:2px;background:#9e9e9e"></div>
<!-- java 2 -->
<svg class="a" style="left:1332px;top:1035px" width="30" height="30" viewBox="0 0 30 30">
<rect x="0.5" y="0.5" width="29" height="29" rx="1.5" fill="url(#dkbg)" stroke="#56789c" stroke-width="1"/>
<path d="M6 13 L2.5 16 L3.5 21 L10 22 L10 14 Z" fill="#2a2a2a"/>
<path d="M4.5 16.5 Q7 15 10 15.5 L10 17.5 Q7 18 4.5 18 Z" fill="#8cc4f0"/>
<path d="M4.5 18.5 L10 18.5 L10 21 L5 20.5 Z" fill="#8a7a5a"/>
<path d="M10 12 L20 11 Q23 18 22 25 Q19 27 16 25.5 Q13 27 10 25 Q9 18 10 12 Z" fill="url(#dkbody)"/>
<path d="M13.5 1.5 Q17 5 21.5 13 L10 13 Q11 6 13.5 1.5 Z" fill="#202020"/>
<circle cx="15.5" cy="11" r="3.6" fill="url(#dknose)"/>
<path d="M21 13 L23 12 L24 16 L25.5 11.5 L27 12.5 L25 19 L22 19 Z" fill="#1a1a1a"/>
</svg>
<div class="a" style="left:1343px;top:1071px;width:7px;height:3px;border-radius:2px;background:#9e9e9e"></div>
<!-- paint -->
<svg class="a" style="left:1388px;top:1033px" width="30" height="32"><defs><linearGradient id="pnt" x1="0.2" y1="0" x2="0.8" y2="1"><stop offset="0" stop-color="#4cdcfb"/><stop offset="1" stop-color="#1488e6"/></linearGradient></defs>
<path d="M16 1.5 Q26 2 28 12 Q29.5 20 24 26 Q20 30 15 27.5 Q12 26 12.5 23 Q12 20 9.5 21.5 Q7 24 4 22 Q0 19 1 13 Q3 3 16 1.5 Z" fill="url(#pnt)"/>
<circle cx="15" cy="8.5" r="2.4" fill="#ffc400"/><circle cx="8" cy="12.5" r="2.5" fill="#3aa018"/><circle cx="5" cy="19" r="2.3" fill="#e04818"/><circle cx="14" cy="20.5" r="1.7" fill="#1c1c1c"/>
<path d="M18.5 15 L24.5 15 L23 18.5 L20 18.5 Z" fill="#f4c890"/><rect x="20" y="18.5" width="3" height="2.2" fill="#e8e8f0"/><rect x="20.2" y="20.7" width="2.6" height="14" fill="#c06c10"/>
</svg>
<div class="a" style="left:1398px;top:1071px;width:7px;height:3px;border-radius:2px;background:#9e9e9e"></div>
<!-- java 3 -->
<svg class="a" style="left:1442px;top:1035px" width="30" height="30" viewBox="0 0 30 30">
<rect x="0.5" y="0.5" width="29" height="29" rx="1.5" fill="url(#dkbg)" stroke="#56789c" stroke-width="1"/>
<path d="M6 13 L2.5 16 L3.5 21 L10 22 L10 14 Z" fill="#2a2a2a"/>
<path d="M4.5 16.5 Q7 15 10 15.5 L10 17.5 Q7 18 4.5 18 Z" fill="#8cc4f0"/>
<path d="M4.5 18.5 L10 18.5 L10 21 L5 20.5 Z" fill="#8a7a5a"/>
<path d="M10 12 L20 11 Q23 18 22 25 Q19 27 16 25.5 Q13 27 10 25 Q9 18 10 12 Z" fill="url(#dkbody)"/>
<path d="M13.5 1.5 Q17 5 21.5 13 L10 13 Q11 6 13.5 1.5 Z" fill="#202020"/>
<circle cx="15.5" cy="11" r="3.6" fill="url(#dknose)"/>
<path d="M21 13 L23 12 L24 16 L25.5 11.5 L27 12.5 L25 19 L22 19 Z" fill="#1a1a1a"/>
</svg>
<div class="a" style="left:1453px;top:1071px;width:7px;height:3px;border-radius:2px;background:#9e9e9e"></div>
<!-- tray -->
<svg class="a" style="left:1569px;top:1044px" width="16" height="11"><path d="M1.5 9.5 L8 3 L14.5 9.5" stroke="#f0f0f0" stroke-width="1.6" fill="none"/></svg>
<svg class="a" style="left:1606px;top:1042px" width="22" height="15"><path d="M4 14 Q0 14 0.5 10.5 Q1 7.5 4.5 7.8 Q5.5 2 11 2 Q16 2 17 7 Q21.5 7.5 21.5 11 Q21 14 17.5 14 Z" fill="#e8e8e8"/><path d="M4 14 Q0 14 0.5 10.5 Q1 7.5 4.5 7.8 Q8 8 11 10 Q14 12 17.5 14 Z" fill="#999999"/></svg>
<div class="a" style="left:1650px;top:1031px;color:#f4f4f4;font-size:15px;line-height:18px;white-space:nowrap">ENG</div>
<div class="a" style="left:1656px;top:1051px;color:#f4f4f4;font-size:15px;line-height:18px;white-space:nowrap">US</div>
<svg class="a" style="left:1701px;top:1041px" width="22" height="17"><path d="M1.5 6 Q11 -2 20.5 6" stroke="#f0f0f0" stroke-width="1.7" fill="none"/><path d="M4.5 9 Q11 3.5 17.5 9" stroke="#f0f0f0" stroke-width="1.7" fill="none"/><path d="M7.5 12 Q11 9 14.5 12" stroke="#f0f0f0" stroke-width="1.7" fill="none"/><circle cx="11" cy="15" r="1.6" fill="#f0f0f0"/></svg>
<svg class="a" style="left:1731px;top:1040px" width="24" height="20"><path d="M1.5 6.5 L5.5 6.5 L10 3 L10 17 L5.5 13.5 L1.5 13.5 Z" stroke="#f0f0f0" stroke-width="1.5" fill="none" stroke-linejoin="round"/><path d="M12.8 7.5 Q14.2 10 12.8 12.5" stroke="#f0f0f0" stroke-width="1.4" fill="none"/><path d="M15.2 5.2 Q17.8 10 15.2 14.8" stroke="#f0f0f0" stroke-width="1.4" fill="none"/><path d="M17.8 1.5 Q22 10 17.8 18.5" stroke="#f0f0f0" stroke-width="1.4" fill="none"/></svg>
<svg class="a" style="left:1761px;top:1039px" width="23" height="19"><rect x="1.2" y="5" width="16.6" height="12.2" rx="2.4" stroke="#f0f0f0" stroke-width="1.5" fill="none"/><path d="M6 7 L15.8 7 L15.8 15.2 L4 15.2 Q5.5 11 6 7 Z" fill="#f0f0f0"/><rect x="18" y="9" width="2.6" height="4.4" rx="0.8" fill="#f0f0f0"/><path d="M4.8 0.5 L2.2 6 L4.6 6 L3 11.5" stroke="#f0f0f0" stroke-width="1.4" fill="none"/></svg>
<div class="a" style="left:1802px;top:1031px;color:#f4f4f4;font-size:15px;line-height:18px;white-space:nowrap">10:15 AM</div>
<div class="a" style="left:1805px;top:1051px;color:#f4f4f4;font-size:15px;line-height:18px;white-space:nowrap">3/4/2024</div>
<svg class="a" style="left:1876px;top:1040px" width="19" height="21"><path d="M9.5 1 Q3 1 3 8 L3 12 L1 15.5 L18 15.5 L16 12 L16 8 Q16 1 9.5 1 Z" fill="#8fd9f2"/><path d="M7 17 Q9.5 20.5 12 17 Z" fill="#8fd9f2"/></svg>

</body></html>
